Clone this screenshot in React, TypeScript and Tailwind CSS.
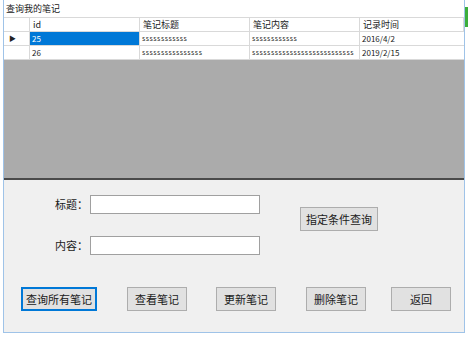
import React from 'react';

const font = { fontFamily: '"Noto Sans CJK SC", "Liberation Sans", sans-serif' };

const columns = [
  { key: 'id', label: 'id', w: 'w-[110px]' },
  { key: 'title', label: '笔记标题', w: 'w-[110px]' },
  { key: 'content', label: '笔记内容', w: 'w-[110px]' },
  { key: 'time', label: '记录时间', w: 'flex-1' },
];

const rows = [
  { id: '25', title: 'ssssssssssss', content: 'ssssssssssss', time: '2016/4/2' },
  { id: '26', title: 'ssssssssssssssss', content: 'sssssssssssssssssssssssssss', time: '2019/2/15' },
];

function Btn({ children, w, focused }: { children: React.ReactNode; w: string; focused?: boolean }) {
  return (
    <div
      className={`${w} h-[24px] flex items-center justify-center bg-[#e1e1e1] text-[11px] text-[#1a1a1a] border ${
        focused ? 'border-[#0078d7] shadow-[inset_0_0_0_1px_#0078d7]' : 'border-[#adadad]'
      }`}
    >
      {children}
    </div>
  );
}

export default function App() {
  return (
    <div className="w-[468px] h-[337px] bg-white flex overflow-hidden" style={font}>
      <div className="w-[3px]" />
      <div className="w-[462px] h-[333px] flex flex-col border-x border-b border-[#9fc3e8]">
        {/* title */}
        <div className="h-[17px] bg-white flex items-center pl-[2px] text-[9px] leading-none text-[#222]">
          查询我的笔记
        </div>

        {/* data grid */}
        <div className="h-[163px] bg-[#ababab] border-b-2 border-[#4a4a4a] flex flex-col">
          <div className="h-[15px] flex bg-white border-y border-[#d9d9d9] text-[9px] leading-none text-[#222]">
            <div className="w-[26px] border-r border-[#d9d9d9]" />
            {columns.map((c) => (
              <div key={c.key} className={`${c.w} border-r border-[#d9d9d9] flex items-center pl-[3px]`}>
                {c.label}
              </div>
            ))}
          </div>
          {rows.map((r, i) => (
            <div key={r.id} className="h-[14px] flex bg-white border-b border-[#d9d9d9] text-[8px] leading-none text-[#222]">
              <div className="w-[26px] border-r border-[#d9d9d9] flex items-center pl-[5px] text-[7px]">
                {i === 0 ? '▶' : ''}
              </div>
              <div
                className={`w-[110px] border-r border-[#d9d9d9] flex items-center pl-[2px] ${
                  i === 0 ? 'bg-[#0078d7] text-white' : ''
                }`}
              >
                {r.id}
              </div>
              <div className="w-[110px] border-r border-[#d9d9d9] flex items-center pl-[2px] text-[7px] tracking-[0.5px]">
                {r.title}
              </div>
              <div className="w-[110px] border-r border-[#d9d9d9] flex items-center pl-[2px] text-[7px] tracking-[0.5px]">
                {r.content}
              </div>
              <div className="flex-1 flex items-center pl-[2px]">{r.time}</div>
            </div>
          ))}
        </div>

        {/* form */}
        <div className="flex-1 bg-[#f0f0f0] flex flex-col pt-[15px]">
          <div className="flex">
            <div className="flex flex-col gap-[22px]">
              <div className="flex items-center">
                <span className="w-[86px] text-right pr-[2px] text-[11px] text-[#1a1a1a]">标题：</span>
                <div className="w-[170px] h-[19px] bg-white border border-[#a0a0a0]" />
              </div>
              <div className="flex items-center">
                <span className="w-[86px] text-right pr-[2px] text-[11px] text-[#1a1a1a]">内容：</span>
                <div className="w-[170px] h-[19px] bg-white border border-[#a0a0a0]" />
              </div>
            </div>
            <div className="ml-[40px] mt-[12px]">
              <Btn w="w-[78px]">指定条件查询</Btn>
            </div>
          </div>

          <div className="flex pl-[17px] mt-[32px]">
            <Btn w="w-[76px]" focused>查询所有笔记</Btn>
            <div className="ml-[30px]"><Btn w="w-[60px]">查看笔记</Btn></div>
            <div className="ml-[29px]"><Btn w="w-[60px]">更新笔记</Btn></div>
            <div className="ml-[30px]"><Btn w="w-[60px]">删除笔记</Btn></div>
            <div className="ml-[25px]"><Btn w="w-[60px]">返回</Btn></div>
          </div>
        </div>
      </div>
      <div className="flex-1 flex flex-col">
        <div className="h-[7px]" />
        <div className="h-[20px] bg-[#3cae3c]" />
      </div>
    </div>
  );
}
